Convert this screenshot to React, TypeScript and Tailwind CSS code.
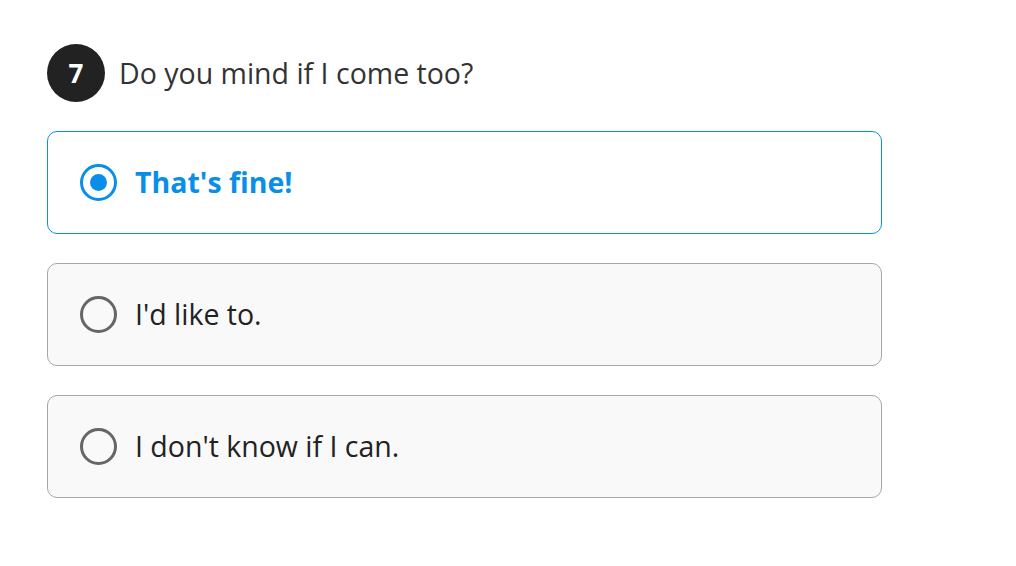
import { useState } from "react";

const options = ["That's fine!", "I'd like to.", "I don't know if I can."];

export default function App() {
  const [selected, setSelected] = useState(0);

  return (
    <div
      className="min-h-screen bg-white pl-[47px] pt-[44px]"
      style={{ fontFamily: '"Open Sans", "Noto Sans", sans-serif' }}
    >
      <div className="flex items-center gap-[14px]">
        <div className="flex h-[58px] w-[58px] items-center justify-center rounded-full bg-[#222222] text-[26px] font-bold text-white">
          7
        </div>
        <h2 className="text-[28.5px] text-[#333333]">Do you mind if I come too?</h2>
      </div>

      <div className="mt-[29px] flex w-[835px] flex-col gap-[29.5px]">
        {options.map((label, i) => {
          const active = i === selected;
          return (
            <button
              key={label}
              onClick={() => setSelected(i)}
              className={
                active
                  ? "flex h-[102.5px] items-center gap-[18px] rounded-[10px] border border-[#0a8fe8] bg-white pl-[32px] text-left"
                  : "flex h-[102.5px] items-center gap-[18px] rounded-[10px] border border-[#a6a6a6] bg-[#f9f9f9] pl-[32px] text-left"
              }
            >
              <span
                className={
                  active
                    ? "flex h-[37px] w-[37px] items-center justify-center rounded-full border-[3px] border-[#0a8fe8]"
                    : "flex h-[37px] w-[37px] items-center justify-center rounded-full border-[3px] border-[#666666]"
                }
              >
                {active && <span className="h-[17px] w-[17px] rounded-full bg-[#0a8fe8]" />}
              </span>
              <span
                className={
                  active
                    ? "text-[28.5px] font-bold text-[#0a8fe8]"
                    : "text-[28.5px] text-[#222222]"
                }
              >
                {label}
              </span>
            </button>
          );
        })}
      </div>
    </div>
  );
}
